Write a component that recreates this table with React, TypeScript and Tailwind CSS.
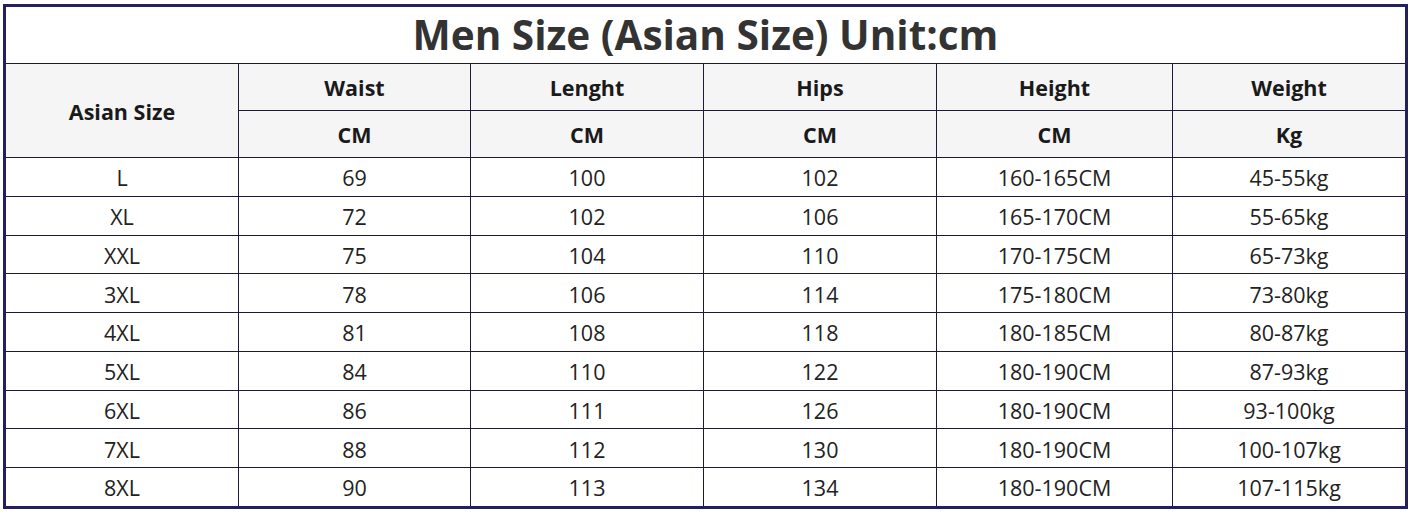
import React from "react";

const rows: string[][] = [
  ["L", "69", "100", "102", "160-165CM", "45-55kg"],
  ["XL", "72", "102", "106", "165-170CM", "55-65kg"],
  ["XXL", "75", "104", "110", "170-175CM", "65-73kg"],
  ["3XL", "78", "106", "114", "175-180CM", "73-80kg"],
  ["4XL", "81", "108", "118", "180-185CM", "80-87kg"],
  ["5XL", "84", "110", "122", "180-190CM", "87-93kg"],
  ["6XL", "86", "111", "126", "180-190CM", "93-100kg"],
  ["7XL", "88", "112", "130", "180-190CM", "100-107kg"],
  ["8XL", "90", "113", "134", "180-190CM", "107-115kg"],
];

const heads = ["Waist", "Lenght", "Hips", "Height", "Weight"];
const units = ["CM", "CM", "CM", "CM", "Kg"];

export default function App() {
  return (
    <div className="w-[1413px] h-[515px] bg-white pt-[4px] pl-[3px]" style={{ fontFamily: '"Open Sans", sans-serif' }}>
      <div className="w-[1405px] h-[505px] border-[3px] border-[#23205f] bg-[#1c1a3a] grid gap-px grid-cols-[232px_231px_232px_232px_235px_232px] grid-rows-[56px_46px_46px_repeat(9,1fr)]">
        <div className="col-span-6 bg-white flex items-center justify-center text-[40.5px] font-bold text-[#333333] leading-none pt-[1px]">
          Men Size (Asian Size) Unit:cm
        </div>
        <div className="row-span-2 bg-[#f5f5f5] flex items-center justify-center text-[21.5px] font-bold text-[#1a1a1a] pt-[3px]">
          Asian Size
        </div>
        {heads.map((h) => (
          <div key={h} className="bg-[#f5f5f5] flex items-center justify-center text-[21.5px] font-bold text-[#1a1a1a] pt-[3px]">
            {h}
          </div>
        ))}
        {units.map((u, i) => (
          <div key={i} className="bg-[#f5f5f5] flex items-center justify-center text-[21.5px] font-bold text-[#1a1a1a] pt-[3px]">
            {u}
          </div>
        ))}
        {rows.map((r, ri) =>
          r.map((c, ci) => (
            <div key={`${ri}-${ci}`} className="bg-white flex items-center justify-center text-[21.5px] text-[#222222] pt-[3px]">
              {c}
            </div>
          ))
        )}
      </div>
    </div>
  );
}
